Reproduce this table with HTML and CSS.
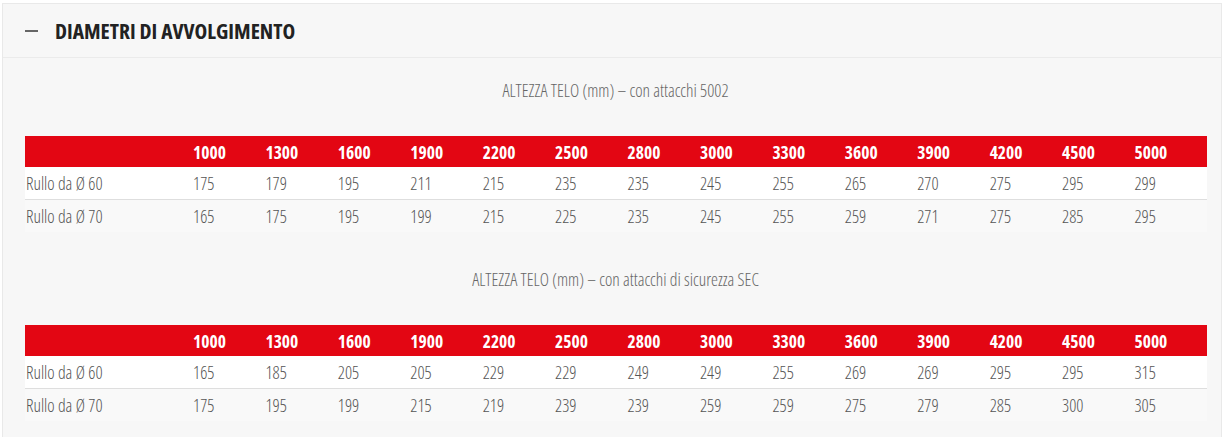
FILE: index.html
```html
<!DOCTYPE html>
<html lang="it">
<head>
<meta charset="utf-8">
<title>Diametri di avvolgimento</title>
<link rel="stylesheet" href="styles.css">
</head>
<body>
<section class="panel">
  <header class="panel-head">
    <span class="minus"></span>
    <h2 class="panel-title">DIAMETRI DI AVVOLGIMENTO</h2>
  </header>
  <div class="panel-body">
    <p class="caption">ALTEZZA TELO (mm) – con attacchi 5002</p>
    <table class="dt">
      <colgroup><col class="c-label"><col span="14"></colgroup>
      <thead>
        <tr><th></th><th>1000</th><th>1300</th><th>1600</th><th>1900</th><th>2200</th><th>2500</th><th>2800</th><th>3000</th><th>3300</th><th>3600</th><th>3900</th><th>4200</th><th>4500</th><th>5000</th></tr>
      </thead>
      <tbody>
        <tr><td>Rullo da Ø 60</td><td>175</td><td>179</td><td>195</td><td>211</td><td>215</td><td>235</td><td>235</td><td>245</td><td>255</td><td>265</td><td>270</td><td>275</td><td>295</td><td>299</td></tr>
        <tr><td>Rullo da Ø 70</td><td>165</td><td>175</td><td>195</td><td>199</td><td>215</td><td>225</td><td>235</td><td>245</td><td>255</td><td>259</td><td>271</td><td>275</td><td>285</td><td>295</td></tr>
      </tbody>
    </table>
    <p class="caption">ALTEZZA TELO (mm) – con attacchi di sicurezza SEC</p>
    <table class="dt">
      <colgroup><col class="c-label"><col span="14"></colgroup>
      <thead>
        <tr><th></th><th>1000</th><th>1300</th><th>1600</th><th>1900</th><th>2200</th><th>2500</th><th>2800</th><th>3000</th><th>3300</th><th>3600</th><th>3900</th><th>4200</th><th>4500</th><th>5000</th></tr>
      </thead>
      <tbody>
        <tr><td>Rullo da Ø 60</td><td>165</td><td>185</td><td>205</td><td>205</td><td>229</td><td>229</td><td>249</td><td>249</td><td>255</td><td>269</td><td>269</td><td>295</td><td>295</td><td>315</td></tr>
        <tr><td>Rullo da Ø 70</td><td>175</td><td>195</td><td>199</td><td>215</td><td>219</td><td>239</td><td>239</td><td>259</td><td>259</td><td>275</td><td>279</td><td>285</td><td>300</td><td>305</td></tr>
      </tbody>
    </table>
  </div>
</section>
</body>
</html>
```
FILE: styles.css
```css
html, body {
  margin: 0;
  padding: 0;
  background: #ffffff;
}

body {
  font-family: "Open Sans", "Liberation Sans", sans-serif;
  font-stretch: 75%;
  color: #555;
}

.panel {
  margin: 3px 3px 0 2px;
  background: #f7f7f7;
  border: 1px solid #e9e9e9;
  border-bottom: none;
}

.panel-head {
  display: flex;
  align-items: center;
  height: 53px;
  padding-left: 22px;
  border-bottom: 1px solid #ebebeb;
}

.minus {
  display: block;
  width: 13px;
  height: 2px;
  background: #666;
  margin-right: 17px;
}

.panel-title {
  margin: 0;
  font-size: 21.5px;
  font-weight: 700;
  color: #222;
}

.panel-body {
  display: flex;
  flex-direction: column;
  padding: 21px 15px 16px 22px;
}

.caption {
  margin: 0;
  height: 22px;
  line-height: 22px;
  text-align: center;
  font-size: 17.5px;
  font-weight: 300;
  color: #666;
}

.caption + .dt {
  margin-top: 35px;
}

.dt + .caption {
  margin-top: 36px;
}

.dt {
  width: 1182px;
  border-collapse: collapse;
  table-layout: fixed;
}

.c-label {
  width: 168px;
}

.dt thead tr {
  background: #e30613;
}

.dt th {
  height: 31px;
  padding: 0;
  text-align: left;
  font-size: 17.5px;
  font-weight: 700;
  color: #fff;
}

.dt td {
  height: 32px;
  padding: 0;
  text-align: left;
  font-size: 17.5px;
  font-weight: 300;
  color: #555;
}

.dt td:first-child {
  padding-left: 1px;
}

.dt tbody tr:first-child {
  background: #ffffff;
  border-bottom: 1px solid #dedede;
}

.dt tbody tr:last-child {
  background: #f9f9f9;
}
```
